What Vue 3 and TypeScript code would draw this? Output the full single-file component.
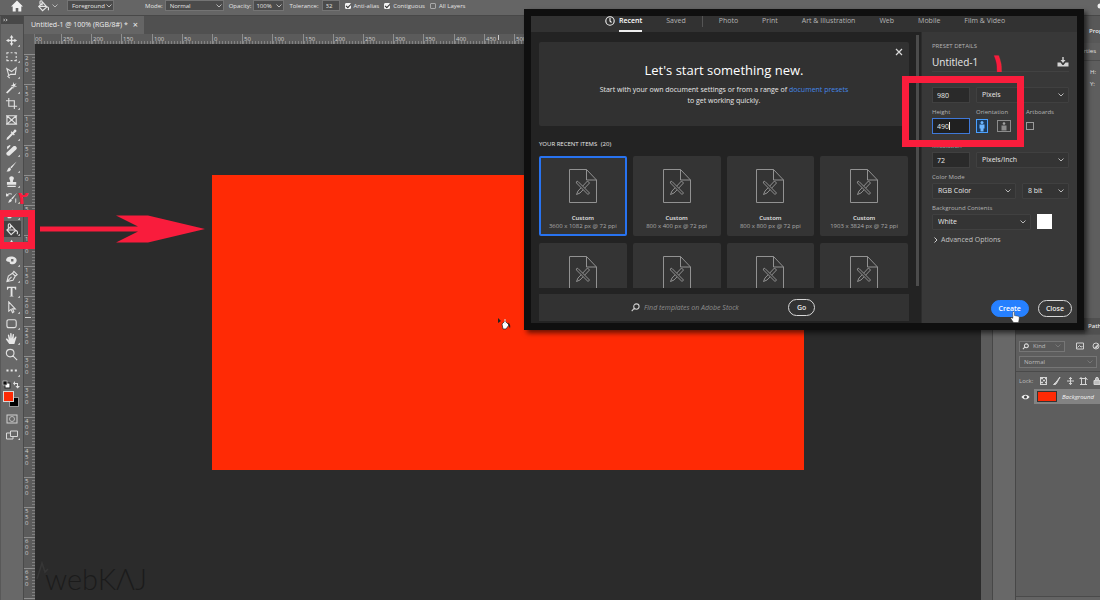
<script setup lang="ts">
import { ref } from 'vue'

type Tool = { name: string; d: string; fill?: boolean; menu?: boolean }

const tools: Tool[] = [
  { name: 'Move', d: 'M7 1L9 4H7.7V6.3H10V5L13 7L10 9V7.7H7.7V10H9L7 13L5 10H6.3V7.7H4V9L1 7L4 5V6.3H6.3V4H5Z', fill: true, menu: true },
  { name: 'Rectangular marquee', d: 'M2 4.5V3H4M6 3H8M10 3H12V4.5M12 6.5V8.5M12 10V11.500H10M8 11.500H6M4 11.500H2V10M2 8.500V6.500', menu: true },
  { name: 'Polygonal lasso', d: 'M4 10L2 3L7 6L12 2L11 9L6 9L3 11L5 13', menu: true },
  { name: 'Magic wand', d: 'M1 12.500L7.500 6L8.800 7.300L2.500 13.500ZM9 1L9.700 3.500L12.500 2.500L10.500 4.700L13 6.500L10 6L9.500 8.500L8.700 5.700L6 5.500L8.300 4Z', fill: true, menu: true },
  { name: 'Crop', d: 'M4 1V10H13M1 4H10V13', menu: true },
  { name: 'Frame', d: 'M2 3H12V12H2ZM2 3L12 12M12 3L2 12M1 3H13M1 12H13' },
  { name: 'Eyedropper', d: 'M1.500 13L2 10.500L7 5.500L6 4.500L7 3.500L8.200 4.500L10 2C11 1 13 2.500 12 4L9.500 6L10.500 7L9.500 8L8.500 7L3.500 12.200Z', fill: true, menu: true },
  { name: 'Healing brush', d: 'M1.500 9.500L9 2.500C11 1 14 4 12 6L5 12.500C3 13.500 .5 11.500 1.500 9.500ZM2 3L5 1L6 2L2.500 6Z', fill: true, menu: true },
  { name: 'Brush', d: 'M12.500 1.500L7 9L5.500 7.700ZM5 8.200L6.500 9.600C6 12 4 12.500 1.500 12.500C3 11.500 2.500 9 5 8.200Z', fill: true, menu: true },
  { name: 'Clone stamp', d: 'M5.500 7.500C6 6 4.500 4.500 4.500 3.500C4.500 .5 9.500 .5 9.500 3.500C9.500 4.500 8 6 8.500 7.500H12V10.500H2V7.500ZM2.500 11.500H11.500V13H2.500Z', fill: true, menu: true },
  { name: 'History brush', d: 'M13 2L8 9L6.500 8ZM6 8.500L7.500 9.500C7 12 5 12.500 3 12.500C4.500 11.500 4 9 6 8.500ZM1 2L2 3.500C4 2 6 2 7.500 3L7 4C5 3.300 4 3.500 3 4.500L4.500 5.500L1 6ZM11 8V13L12 12V8Z', fill: true, menu: true },
  { name: 'Eraser', d: 'M2 9L8 3L12 6L6 12H3Z', fill: true, menu: true },
  { name: 'Paint bucket', d: 'M2 7.500L7 3L11.500 8L6.500 12.500ZM2.500 7.500H11M6 6V2C6 .5 3.500 .5 3.500 2V5M12 8C14 9 13.500 11 13 12', menu: true },
  { name: 'Blur', d: 'M7 2L10 7C12 12 2 12 4 7Z', fill: true },
  { name: 'Dodge', d: 'M1 6.500C1.500 3 5.500 2 9 3C13 4 13.500 8 11 10C9.500 11.500 6 11.500 5 10V8.500C3 8.500 1.500 8 1 6.500ZM6.500 5.500V8H9V5.500Z', fill: true, menu: true },
  { name: 'Pen', d: 'M2 12.500L3.500 6.500L8 3.500L11 6.500L8.500 11ZM8 3.500L9.500 1.500L13 5L11 6.500M2 12.500L7 7.500', menu: true },
  { name: 'Type', d: 'M2 2H12V5H11C10.800 3.800 10 3.300 8 3.300V11.500L9.500 12.500H4.500L6 11.500V3.300C4 3.300 3.200 3.800 3 5H2Z', fill: true, menu: true },
  { name: 'Path selection', d: 'M4 1V11L6.500 9L8 12.500L9.500 11.700L8 8.500H11Z', menu: true },
  { name: 'Rounded rectangle', d: 'M4 3H10C11.500 3 12 3.500 12 5V9.500C12 11 11.500 11.500 10 11.500H4C2.500 11.500 2 11 2 9.500V5C2 3.500 2.500 3 4 3Z', menu: true },
  { name: 'Hand', d: 'M4.500 13L1 8C.5 7 1.700 6.500 2.500 7.300L4 9L3 3.500C3 2.500 4.200 2.500 4.500 3.500L5.500 7V1.700C5.500 .8 6.900 .8 7 1.700L7.300 7L8.300 2.500C8.600 1.700 9.800 2 9.600 3L9.200 7.500L11 5C11.500 4.300 12.700 5 12.200 5.800L10 13Z', fill: true, menu: true },
  { name: 'Zoom', d: 'M5.500 1.500C11 1.500 11 9.500 5.500 9.500C0 9.500 0 1.500 5.500 1.500ZM8.500 8.500L13 13' },
  { name: 'More tools', d: 'M1.500 6H3.700V8.200H1.500ZM6 6H8.200V8.200H6ZM10.500 6H12.700V8.200H10.500Z', fill: true, menu: true },
]

const activeTool = ref('Paint bucket')

const STEP = 30.2
const majors = (from: number, to: number, origin: number) =>
  Array.from({ length: to - from + 1 }, (_, i) => ({
    pos: Math.round(origin + (from + i) * STEP),
    label: String(Math.abs((from + i) * 50)),
  }))
const minors = (from: number, to: number, origin: number) =>
  Array.from({ length: (to - from) * 10 }, (_, i) => Math.round(origin + from * STEP + (i * STEP) / 10))

const xMajors = majors(-5, 25, 178)
const xMinors = minors(-6, 26, 178)
const yMajors = majors(-4, 13, 131)
const yMinors = minors(-4, 15, 131)

const categories = ['Photo', 'Print', 'Art & Illustration', 'Web', 'Mobile', 'Film & Video']
const recents = [
  '3600 x 1082 px @ 72 ppi',
  '800 x 400 px @ 72 ppi',
  '800 x 800 px @ 72 ppi',
  '1903 x 3824 px @ 72 ppi',
]
const selected = ref(0)

const docName = ref('Untitled-1')
const width = ref('980')
const height = ref('490')
const resolution = ref('72')
const query = ref('')
const tolerance = ref('32')
const antiAlias = ref(true)
const contiguous = ref(true)
const allLayers = ref(false)
const artboards = ref(false)
</script>

<template>
  <div class="app">
    <header class="options">
      <button class="plain home" aria-label="Home">
        <svg viewBox="0 0 12 12" width="12" height="12"><path d="M6 .5L12 6.500H10.300V11.500H7.300V8H4.700V11.500H1.700V6.500H0Z" fill="#f2f2f2" /></svg>
      </button>
      <button class="plain bucket" aria-label="Paint bucket presets">
        <svg viewBox="0 0 14 14" width="12" height="12" fill="none" stroke="#e4e4e4" stroke-width="1.300"><path :d="tools[12].d" /></svg>
        <svg class="chev" viewBox="0 0 6 4" width="6" height="4"><path d="M.5 .5L3 3L5.500 .5" /></svg>
      </button>
      <span class="select fill-source">
        <select aria-label="Fill source"><option>Foreground</option></select>
        <svg class="chev" viewBox="0 0 6 4" width="6" height="4"><path d="M.5 .5L3 3L5.500 .5" /></svg>
      </span>
      <label class="opt mode">Mode:
        <span class="select">
          <select><option>Normal</option></select>
          <svg class="chev" viewBox="0 0 6 4" width="6" height="4"><path d="M.5 .5L3 3L5.500 .5" /></svg>
        </span>
      </label>
      <label class="opt opacity">Opacity:
        <span class="select">
          <select><option>100%</option></select>
          <svg class="chev" viewBox="0 0 6 4" width="6" height="4"><path d="M.5 .5L3 3L5.500 .5" /></svg>
        </span>
      </label>
      <label class="opt tolerance">Tolerance: <input v-model="tolerance" type="text" /></label>
      <label class="opt tick"><input v-model="antiAlias" type="checkbox" />Anti-alias</label>
      <label class="opt tick"><input v-model="contiguous" type="checkbox" />Contiguous</label>
      <label class="opt tick"><input v-model="allLayers" type="checkbox" />All Layers</label>
      <svg class="search-dot" viewBox="0 0 6 6" width="6" height="6"><circle cx="3" cy="3" r="2.500" fill="#f0f0f0" /></svg>
    </header>

    <div class="workspace">
      <aside class="toolbar">
        <div class="collapse">
          <svg viewBox="0 0 6 4" width="5" height="4"><path d="M.5 .5L2 2L.5 3.500M3.500 .5L5 2L3.500 3.500" fill="none" stroke="#ddd" /></svg>
        </div>
        <nav class="tools" aria-label="Tools">
          <button
            v-for="t in tools"
            :key="t.name"
            class="plain tool"
            :class="{ active: t.name === activeTool }"
            :aria-label="t.name"
            @click="activeTool = t.name"
          >
            <svg viewBox="0 0 16 14" width="15" height="13">
              <path :d="t.d" :fill="t.fill ? '#e6e6e6' : 'none'" :stroke="t.fill ? 'none' : '#e0e0e0'" stroke-width="1.200" fill-rule="evenodd" />
              <path v-if="t.menu" d="M16 11.500V13.800H13.700Z" fill="#ddd" />
            </svg>
          </button>
        </nav>
        <svg class="swatches" viewBox="0 0 22 64" width="22" height="64">
          <rect x="4" y="5" width="5" height="5" fill="#fff" stroke="#222" />
          <rect x="2" y="3" width="4" height="4" fill="#111" stroke="#ddd" stroke-width=".6" />
          <path d="M12 5.500L14 3V5H17V8H19L16.500 10.500L14.500 8H16V6H14V7.500Z" fill="#e0e0e0" />
          <rect x="8.500" y="19.500" width="9" height="9" fill="#000" stroke="#999" />
          <rect x="2.500" y="13.500" width="10" height="10" fill="#ff2a05" stroke="#d8d8d8" />
          <rect x="6" y="37" width="10" height="8" fill="none" stroke="#cfcfcf" />
          <circle cx="11" cy="41" r="2.500" fill="none" stroke="#bbb" />
          <path d="M9.500 53H16.500V58.500H9.500ZM9 55H5.500V61H12V59" fill="none" stroke="#d8d8d8" />
          <path d="M19 60V62H17Z" fill="#ddd" />
        </svg>
      </aside>

      <main class="document">
        <div class="tabs">
          <div class="tab">Untitled-1 @ 100% (RGB/8#) * <button class="plain" aria-label="Close document">×</button></div>
        </div>
        <div class="hruler">
          <div class="corner"></div>
          <svg class="hscale" height="10">
            <path v-for="m in xMinors" :key="'n' + m" :d="`M${m + 0.5} 7V10`" stroke="#828282" />
            <text x="0" y="7">00</text>
            <g v-for="m in xMajors" :key="m.pos">
              <path :d="`M${m.pos - 0.5} 0V10`" stroke="#8e8e8e" />
              <text :x="m.pos + 1" y="7">{{ m.label }}</text>
            </g>
            <path d="M463.500 1V6" stroke="#ccc" />
          </svg>
        </div>
        <div class="canvas-row">
          <svg class="vscale" width="11">
            <path v-for="m in yMinors" :key="'n' + m" :d="`M8 ${m + 0.5}H11`" stroke="#828282" />
            <g v-for="m in yMajors" :key="m.pos">
              <path :d="`M0 ${m.pos + 0.5}H11`" stroke="#8e8e8e" />
              <text v-for="(c, i) in m.label" :key="i" x="1" :y="m.pos + 6 + i * 6">{{ c }}</text>
            </g>
            <path d="M0 554.500H11" stroke="#8e8e8e" />
            <path d="M1 273.500H7" stroke="#ccc" />
          </svg>
          <div class="stage">
            <div class="artboard"></div>
            <div class="watermark">
              <svg viewBox="0 0 16 20" width="16" height="20"><path d="M2 19L7 3L10 12L13 9" fill="none" stroke="#363636" stroke-width="1.500" /></svg>
              <span>webKΛJ</span>
            </div>
            <svg class="cursor" viewBox="0 0 14 14" width="14" height="14">
              <path d="M1 2V7L4 5Z" fill="#222" />
              <path d="M5 8L8 5L12 9L9 13H6Z" fill="#fff" stroke="#222" stroke-width=".7" />
              <path d="M8 3V8" stroke="#ddd" />
              <path d="M11 6.500C13.500 8 13.500 10 13 12.500L11.500 9Z" fill="#222" />
            </svg>
          </div>
          <div class="vscroll"></div>
        </div>
      </main>

      <div class="dock"></div>

      <aside class="panels">
        <section class="properties">
          <h2>Properties</h2>
          <p>Properties</p>
          <div class="dims"><span>H:</span><span>Y:</span></div>
        </section>
        <section class="layers">
          <div class="ptabs"><span>Paths</span></div>
          <div class="filter">
            <svg viewBox="0 0 8 8" width="7" height="7"><path d="M5 1C8 1 8 5.500 5 5.500C2 5.500 2 1 5 1ZM3.500 4.500L1 7" fill="none" stroke="#ddd" stroke-width="1.200" /></svg>
            <span class="select">
              <select aria-label="Filter layers"><option>Kind</option></select>
              <svg class="chev dim" viewBox="0 0 6 4" width="6" height="4"><path d="M.5 .5L3 3L5.500 .5" /></svg>
            </span>
            <svg class="pix" viewBox="0 0 24 8" width="24" height="8">
              <path d="M.5 1H7.500V7H.5ZM1.500 5.500L3.500 3.500L5 5L6.500 4.500" fill="none" stroke="#cfcfcf" />
              <circle cx="20" cy="4" r="3" fill="none" stroke="#cfcfcf" /><path d="M18 6L22 2A3 3 0 0 1 18 6Z" fill="#cfcfcf" />
            </svg>
          </div>
          <div class="blend">
            <span class="select">
              <select aria-label="Blend mode"><option>Normal</option></select>
              <svg class="chev dim" viewBox="0 0 6 4" width="6" height="4"><path d="M.5 .5L3 3L5.500 .5" /></svg>
            </span>
          </div>
          <div class="lock">
            <span>Lock:</span>
            <svg viewBox="0 0 62 10" width="62" height="10" fill="none" stroke="#d4d4d4">
              <rect x="1.500" y="1.500" width="6" height="7" />
              <path d="M2 2.500H4M6 2.500H7M4 4.500H6M2 6.500H4M6 6.500H7" stroke-width="1.500" />
              <path d="M21 1L18 5L16.500 6.500L14.500 8.500H16.500L18 6.500Z" fill="#d4d4d4" />
              <path d="M28 5H35M31.500 1.500V8.500M30 3L31.500 1.300L33 3M30 7L31.500 8.700L33 7" />
              <path d="M42 1V3M40.500 2.500H47.500M42.500 2.500V8.500M46.500 2.500V8.500M41 8.500H48M46 1L48.500 4" />
              <path d="M55 4.500H61V8.500H55ZM56.500 4.500V2.500C56.500 1 59.500 1 59.500 2.500V4.500" fill="#d4d4d4" fill-opacity=".8" />
            </svg>
          </div>
          <div class="layer">
            <svg class="eye" viewBox="0 0 10 8" width="9" height="8"><path d="M.5 4C3 .5 7 .5 9.500 4C7 7.500 3 7.500 .5 4Z" fill="#f0f0f0" /><circle cx="5" cy="4" r="1.700" fill="#444" /></svg>
            <div class="layer-body"><i class="thumb"></i><em>Background</em></div>
          </div>
          <div class="panel-foot"></div>
        </section>
      </aside>
    </div>

    <div class="dialog" role="dialog" aria-label="New document">
      <nav class="cats">
        <a href="#" class="current">
          <svg viewBox="0 0 10 10" width="10" height="10" fill="none" stroke="#f5f5f5" stroke-width="1.100"><circle cx="5" cy="5" r="4.200" /><path d="M5 2V5L6.500 6.500" /></svg>
          <span>Recent</span>
        </a>
        <a href="#">Saved</a>
        <i class="sep"></i>
        <a v-for="c in categories" :key="c" href="#">{{ c }}</a>
      </nav>
      <div class="dialog-body">
        <div class="browse">
          <div class="welcome">
            <button class="plain dismiss" aria-label="Dismiss">
              <svg viewBox="0 0 8 8" width="8" height="8"><path d="M1 1L7 7M7 1L1 7" stroke="#dadada" stroke-width="1.200" /></svg>
            </button>
            <h1>Let's start something new.</h1>
            <p>Start with your own document settings or from a range of <a href="#">document presets</a><br />to get working quickly.</p>
          </div>
          <h3>YOUR RECENT ITEMS <span>(20)</span></h3>
          <div class="cards">
            <button
              v-for="i in 8"
              :key="i"
              class="card"
              :class="{ selected: i - 1 === selected }"
              :aria-label="recents[i - 1] ? undefined : 'Recent item ' + i"
              @click="selected = i - 1"
            >
              <svg viewBox="0 0 28 34" width="28" height="34" fill="none" stroke="#929292">
                <path d="M.5 .5H17.500L27.500 11V33.500H.5ZM17.500 .5V11H27.500" />
                <path d="M18.500 12L20.500 14L11 24L7.500 25.500L9 22Z" fill="#343434" />
                <path d="M9 12.500L20.500 24L19 25.500L7.500 14C7 12.500 8 12 9 12.500Z" fill="#343434" />
              </svg>
              <template v-if="recents[i - 1]">
                <b>Custom</b>
                <span>{{ recents[i - 1] }}</span>
              </template>
            </button>
          </div>
          <form class="stock" @submit.prevent>
            <svg viewBox="0 0 10 10" width="9" height="9"><path d="M6 1C10 1 10 7 6 7C2 7 2 1 6 1ZM3.500 6L.8 9" fill="none" stroke="#d0d0d0" stroke-width="1.200" /></svg>
            <input v-model="query" type="text" aria-label="Find templates" placeholder="Find templates on Adobe Stock" />
            <button class="pill">Go</button>
          </form>
          <i class="thumbbar"></i>
        </div>

        <form class="details" @submit.prevent>
          <h3>PRESET DETAILS</h3>
          <div class="name">
            <input v-model="docName" type="text" aria-label="Document name" />
            <button class="plain" aria-label="Save preset">
              <svg viewBox="0 0 12 10" width="12" height="10"><path d="M.5 5.500H3.500L5.500 8H6.500L8.500 5.500H11.500V9.500H.5ZM5.300 0H6.700V3H8.500L6 6L3.500 3H5.300Z" fill="#d4d4d4" /></svg>
            </button>
          </div>
          <label class="lab" for="w">Width</label>
          <div class="row">
            <input id="w" v-model="width" class="num" type="text" />
            <span class="select">
              <select aria-label="Unit"><option>Pixels</option></select>
              <svg class="chev" viewBox="0 0 6 4" width="6" height="4"><path d="M.5 .5L3 3L5.500 .5" /></svg>
            </span>
          </div>
          <div class="trio">
            <label class="lab" for="h">Height</label>
            <span class="lab">Orientation</span>
            <label class="lab" for="ab">Artboards</label>
            <span class="numbox"><input id="h" v-model="height" class="num focus" type="text" /><i class="caret"></i></span>
            <span class="orient">
              <button class="plain on" aria-label="Portrait">
                <svg viewBox="0 0 12 14" width="12" height="14"><rect x=".5" y=".5" width="11" height="13" fill="#1c3a5c" stroke="#4aa0ff" /><circle cx="6" cy="3.500" r="1.500" fill="#6db6ff" /><path d="M3.500 5.500H8.500V9.500H7.500V12.500H4.500V9.500H3.500Z" fill="#6db6ff" /></svg>
              </button>
              <button class="plain" aria-label="Landscape">
                <svg viewBox="0 0 14 12" width="14" height="12"><rect x=".5" y=".5" width="13" height="11" fill="none" stroke="#8c8c8c" /><circle cx="7" cy="3.500" r="1.300" fill="#a0a0a0" /><path d="M4.500 5.500H9.500V10.500H4.500Z" fill="#8c8c8c" /></svg>
              </button>
            </span>
            <input id="ab" v-model="artboards" type="checkbox" />
          </div>
          <label class="lab" for="res">Resolution</label>
          <div class="row">
            <input id="res" v-model="resolution" class="num" type="text" />
            <span class="select">
              <select aria-label="Resolution unit"><option>Pixels/Inch</option></select>
              <svg class="chev" viewBox="0 0 6 4" width="6" height="4"><path d="M.5 .5L3 3L5.500 .5" /></svg>
            </span>
          </div>
          <label class="lab" for="cm">Color Mode</label>
          <div class="row">
            <span class="select">
              <select id="cm"><option>RGB Color</option></select>
              <svg class="chev" viewBox="0 0 6 4" width="6" height="4"><path d="M.5 .5L3 3L5.500 .5" /></svg>
            </span>
            <span class="select depth">
              <select aria-label="Bit depth"><option>8 bit</option></select>
              <svg class="chev" viewBox="0 0 6 4" width="6" height="4"><path d="M.5 .5L3 3L5.500 .5" /></svg>
            </span>
          </div>
          <label class="lab" for="bg">Background Contents</label>
          <div class="row bgrow">
            <span class="select">
              <select id="bg"><option>White</option></select>
              <svg class="chev" viewBox="0 0 6 4" width="6" height="4"><path d="M.5 .5L3 3L5.500 .5" /></svg>
            </span>
            <button class="plain white" aria-label="Background color"></button>
          </div>
          <button class="plain advanced">
            <svg viewBox="0 0 4 6" width="4" height="6"><path d="M.5 .5L3 3L.5 5.500" fill="none" stroke="#d0d0d0" /></svg>
            Advanced Options
          </button>
          <div class="actions">
            <button class="pill create">Create</button>
            <button class="pill">Close</button>
            <svg class="pointer" viewBox="0 0 10 12" width="10" height="12"><path d="M3 .8C3.800 .2 4.500 .8 4.500 1.500V4.500L8.500 5.300C9.500 5.600 9.500 7 8.500 11.500H3.500L.8 7.500C.5 6.500 1.500 6.300 2.800 7.300V1.200Z" fill="#fff" stroke="#333" stroke-width=".5" /></svg>
          </div>
        </form>
      </div>
    </div>

    <div class="mark mark-size"></div>
    <div class="mark mark-tool"></div>
    <span class="digit one">۱</span>
    <span class="digit two">۲</span>
    <svg class="arrow" viewBox="0 0 166 30" width="166" height="30"><path d="M0 12.500H98L76 1.500H108L165 15L108 28.500H76L98 17.500H0Z" fill="#f91c3c" /></svg>
  </div>
</template>

<style>
body {
  margin: 0;
  overflow: hidden;
}
</style>

<style scoped>
* {
  box-sizing: border-box;
}
.app {
  position: relative;
  display: flex;
  flex-direction: column;
  height: 100vh;
  overflow: hidden;
  background: #5e5e5e;
  color: #e4e4e4;
  font: 6px/8px "Open Sans", "Noto Sans", sans-serif;
}
h1, h2, h3, p {
  margin: 0;
  font-weight: 400;
}
button, input, select {
  margin: 0;
  padding: 0;
  border: 0;
  color: inherit;
  font: inherit;
  background: none;
  outline: none;
}
svg {
  display: block;
  flex: none;
}
.plain {
  display: flex;
  align-items: center;
  justify-content: center;
}
.select {
  display: grid;
  align-items: center;
}
.select select {
  grid-area: 1 / 1;
  width: 100%;
  appearance: none;
}
.chev {
  grid-area: 1 / 1;
  justify-self: end;
  margin-right: 4px;
  fill: none;
  stroke: #b8b8b8;
  pointer-events: none;
}
.chev.dim {
  stroke: #777;
}

.options {
  display: flex;
  align-items: center;
  height: 16px;
  padding: 0 0 4px 11px;
  background: #656565;
  border-bottom: 1px solid #484848;
}
.bucket {
  width: 28px;
  margin-left: 12px;
  gap: 3px;
}
.options .select select {
  height: 11px;
  padding-left: 4px;
  background: #4b4b4b;
  border: 1px solid #747474;
}
.fill-source {
  width: 47px;
  margin-left: 4px;
}
.opt {
  display: flex;
  align-items: center;
}
.mode {
  margin-left: 31px;
}
.mode .select {
  width: 59px;
  margin-left: 2px;
}
.opacity {
  margin-left: 5px;
}
.opacity .select {
  width: 31px;
  margin-left: 2px;
}
.opacity .select select {
  padding-left: 2px;
}
.opacity .chev, .mode .chev, .fill-source .chev {
  margin-right: 2px;
}
.tolerance {
  margin-left: 5px;
}
.tolerance input {
  width: 18px;
  height: 11px;
  margin-left: 3px;
  padding-left: 3px;
  background: #4b4b4b;
  border: 1px solid #747474;
}
.tick {
  gap: 3px;
  margin-left: 5px;
}
.tick input {
  display: grid;
  place-items: center;
  width: 6px;
  height: 6px;
  appearance: none;
  border: 1px solid #a8a8a8;
  border-radius: 1px;
}
.tick input:checked {
  background: #f2f2f2;
  border-color: #f2f2f2;
}
.tick input:checked::before {
  content: "";
  width: 4px;
  height: 2px;
  border: solid #333;
  border-width: 0 0 1px 1px;
  transform: rotate(-45deg);
}
.search-dot {
  margin-left: auto;
  margin-right: -3px;
}

.workspace {
  display: flex;
  flex: 1;
  min-height: 0;
}
.toolbar {
  width: 24px;
  background: #686868;
  border-right: 1px solid #4a4a4a;
  border-left: 1px solid #585858;
}
.collapse {
  height: 8px;
  padding: 2px;
  background: #484848;
}
.tools {
  display: grid;
  grid-auto-rows: 1fr;
  height: 345px;
  margin-top: 9px;
}
.tool {
  padding-left: 1px;
}
.tool.active {
  background: #434343;
  margin: 0 2px;
  padding: 0;
}
.document {
  display: flex;
  flex-direction: column;
  flex: 1;
  min-width: 0;
}
.tabs {
  display: flex;
  height: 18px;
  background: #505050;
}
.tab {
  display: flex;
  align-items: center;
  gap: 5px;
  padding: 0 6px 0 7px;
  background: #656565;
  color: #eee;
  font-size: 7px;
}
.tab button {
  font-size: 9px;
}
.hruler {
  display: flex;
  height: 10px;
  background: #5b5b5b;
}
.corner {
  width: 11px;
  border-right: 1px solid #777;
}
.hscale {
  flex: 1;
  min-width: 0;
  overflow: hidden;
}
.hscale text, .vscale text {
  fill: #cdcdcd;
  font: 6px "Open Sans", sans-serif;
}
.canvas-row {
  display: flex;
  flex: 1;
  min-height: 0;
}
.vscale {
  height: 100%;
  background: #5b5b5b;
}
.stage {
  position: relative;
  display: grid;
  place-items: center;
  flex: 1;
  background: #2b2b2b;
}
.artboard {
  width: 592px;
  height: 295px;
  background: #ff2a05;
}
.watermark {
  position: absolute;
  left: 0;
  bottom: 6px;
  display: flex;
  align-items: flex-end;
  color: #1b1b1b;
  font: 300 29px/30px Lato, sans-serif;
}
.watermark svg {
  margin: 0 -6px 14px 0;
}
.cursor {
  position: absolute;
  left: 462px;
  top: 272px;
}
.vscroll {
  width: 11px;
  background: #5c5c5c;
}
.dock {
  width: 24px;
  background: #686868;
  border: solid #474747;
  border-width: 0 1px;
}
.panels {
  display: flex;
  flex-direction: column;
  width: 84px;
  background: #5e5e5e;
}
.properties {
  height: 302px;
  overflow: hidden;
}
.properties h2 {
  padding: 11px 0 8px 73px;
  background: #585858;
  color: #eee;
  font: 600 6px/8px "Open Sans", sans-serif;
}
.properties p {
  padding: 4px 4px 5px 0;
  border-bottom: 1px solid #4c4c4c;
  text-align: right;
}
.dims {
  display: grid;
  gap: 4px;
  margin: 7px 0 0 74px;
}
.ptabs {
  display: flex;
  height: 17px;
  background: #4b4b4b;
  border-bottom: 1px solid #555;
}
.ptabs span {
  width: 15px;
  margin-left: auto;
  padding: 4px 0 0 3px;
  overflow: hidden;
  background: #505050;
  font-weight: 600;
}
.layers {
  display: flex;
  flex-direction: column;
  flex: 1;
}
.filter {
  display: flex;
  align-items: center;
  height: 12px;
  margin: 5px 0 0 3px;
}
.filter > svg:first-child {
  z-index: 1;
  margin-right: -10px;
  margin-left: 3px;
}
.filter .select {
  width: 51px;
}
.filter select {
  height: 11px;
  padding-left: 13px;
}
.filter .pix {
  margin-left: 11px;
}
.layers select {
  border: 1px solid #767676;
  background: #595959;
  color: #bdbdbd;
}
.blend {
  padding: 4px 3px 3px;
  border-bottom: 1px solid #4a4a4a;
}
.blend select {
  height: 12px;
  padding-left: 4px;
}
.lock {
  display: flex;
  align-items: center;
  gap: 6px;
  height: 17px;
  padding-left: 3px;
  color: #bdbdbd;
}
.layer {
  display: flex;
  align-items: center;
}
.eye {
  margin: 0 4px 0 5px;
}
.layer-body {
  display: flex;
  align-items: center;
  flex: 1;
  height: 15px;
  padding-left: 3px;
  gap: 5px;
  background: #838383;
  color: #f4f4f4;
}
.thumb {
  width: 20px;
  height: 11px;
  background: #ff2a05;
  border: 1px solid #333;
}
.panel-foot {
  height: 4px;
  margin-top: auto;
  background: #646464;
  border-top: 1px solid #4a4a4a;
}

.dialog {
  position: absolute;
  left: 524px;
  right: 16px;
  top: 9px;
  background: #232323;
  border: 7px solid #0f0f0f;
  box-shadow: 3px 3px 5px rgba(0, 0, 0, 0.6);
  color: #e8e8e8;
  font: 7px/10px "Open Sans", "Noto Sans", sans-serif;
}
.dialog a {
  color: #b4b4b4;
  text-decoration: none;
}
.cats {
  display: flex;
  gap: 24px;
  height: 16px;
  padding-left: 74px;
  background: #323232;
}
.cats .current {
  display: flex;
  gap: 4px;
  color: #fff;
  font-weight: 600;
}
.current span {
  border-bottom: 2px solid #eee;
}
.sep {
  width: 1px;
  height: 11px;
  margin-left: -8px;
  margin-right: -8px;
  background: #555;
}
.dialog-body {
  display: flex;
}
.browse {
  position: relative;
  flex: 1;
  min-width: 0;
  padding: 10px 12px 2px 8px;
}
.thumbbar {
  position: absolute;
  right: 2px;
  top: 3px;
  bottom: 37px;
  width: 3px;
  background: #4c4c4c;
}
.welcome {
  position: relative;
  padding: 20px 0;
  background: #313131;
  border-radius: 2px;
  text-align: center;
}
.welcome h1 {
  color: #fff;
  font-size: 13px;
  line-height: 17px;
}
.welcome p {
  margin-top: 5px;
  line-height: 11px;
}
.dialog .welcome a {
  color: #4487e8;
}
.dismiss {
  position: absolute;
  right: 6px;
  top: 6px;
}
.browse h3 {
  margin: 13px 0 7px;
  font-size: 6px;
}
.browse h3 span {
  margin-left: 2px;
}
.cards {
  display: grid;
  grid-template-columns: repeat(4, 1fr);
  gap: 7px 6px;
  height: 132px;
  padding-right: 1px;
  overflow: hidden;
}
.card {
  display: flex;
  flex-direction: column;
  align-items: center;
  height: 80px;
  padding-top: 11px;
  background: #343434;
  border: 2px solid #343434;
  border-radius: 2px;
  color: #ababab;
  font-size: 6px;
  line-height: 8px;
}
.card b {
  margin-top: 11px;
  color: #e4e4e4;
  font-weight: 600;
}
.card.selected {
  border-color: #2873f0;
}
.stock {
  display: flex;
  align-items: center;
  height: 27px;
  margin-top: 6px;
  padding-left: 92px;
  background: #323232;
}
.stock input {
  width: 144px;
  margin-left: 4px;
  font-style: italic;
}
.stock input::placeholder {
  color: #8e8e8e;
}
.pill {
  height: 17px;
  padding: 0 7px;
  border: 1px solid #d8d8d8;
  border-radius: 9px;
  font-weight: 600;
}
.details {
  display: flex;
  flex-direction: column;
  width: 156px;
  padding: 9px 8px 6px 10px;
  background: #383838;
  border-left: 1px solid #2c2c2c;
}
.details h3 {
  color: #b4b4b4;
  font-size: 6px;
}
.name {
  display: flex;
  align-items: center;
  justify-content: space-between;
  height: 21px;
  padding-top: 2px;
  border-bottom: 1px solid #424242;
}
.name input {
  width: 90px;
  font-size: 10px;
}
.lab {
  color: #b4b4b4;
  font-size: 6px;
  line-height: 8px;
}
.name + .lab {
  margin-top: 5px;
}
.row {
  display: flex;
  gap: 6px;
  height: 16px;
  margin: 2px 0 5px;
}
.row .select {
  flex: 1;
}
.row select {
  height: 16px;
  padding-left: 5px;
  border: 1px solid #404040;
  background: #343434;
  border-radius: 1px;
}
.row .chev {
  margin-right: 5px;
}
.num {
  width: 38px;
  height: 16px;
  padding-left: 4px;
  border: 1px solid #404040;
  background: #2a2a2a;
}
.row .depth {
  flex: 0 0 47px;
}
.trio {
  display: grid;
  grid-template-columns: 38px 44px 1fr;
  gap: 2px 6px;
  align-items: center;
  margin-bottom: 8px;
}
.num.focus {
  border: 1px solid #3f78d8;
  background: #202020;
}
.numbox {
  position: relative;
}
.numbox .num {
  display: block;
}
.caret {
  position: absolute;
  left: 17px;
  top: 4px;
  width: 1px;
  height: 8px;
  background: #eee;
}
.orient {
  display: flex;
  align-items: center;
  gap: 9px;
}
.trio input[type="checkbox"] {
  width: 8px;
  height: 8px;
  appearance: none;
  border: 1px solid #9a9a9a;
}
.bgrow .select {
  flex: 0 0 99px;
}
.white {
  width: 15px;
  height: 15px;
  background: #fff;
}
.advanced {
  align-self: flex-start;
  gap: 3px;
  margin-left: 2px;
  color: #c0c0c0;
}
.actions {
  position: relative;
  display: flex;
  justify-content: flex-end;
  gap: 9px;
  margin: auto -3px 0 0;
}
.create {
  background: #2680ff;
  border-color: #2680ff;
  color: #fff;
}
.stock .pill {
  padding: 0 8px;
}
.pointer {
  position: absolute;
  right: 52px;
  top: 11px;
}

.mark {
  position: absolute;
  border: 7px solid #fa1d3c;
}
.mark-size {
  left: 902px;
  top: 76px;
  width: 122px;
  height: 71px;
}
.mark-tool {
  left: -3px;
  top: 210px;
  width: 38px;
  height: 39px;
}
.digit {
  position: absolute;
  color: #f91c3c;
  font: 700 26px/26px "DejaVu Sans", sans-serif;
}
.one {
  left: 990px;
  top: 50px;
}
.two {
  left: 18px;
  top: 188px;
  font-size: 17px;
  line-height: 20px;
}
.arrow {
  position: absolute;
  left: 40px;
  top: 214px;
}
</style>
